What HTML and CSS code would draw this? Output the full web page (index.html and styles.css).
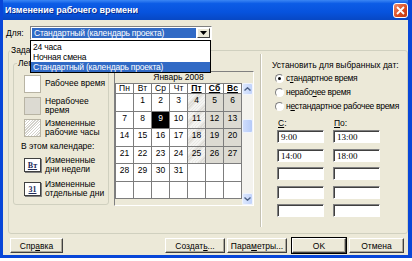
FILE: index.html
```html
<!DOCTYPE html>
<html lang="ru">
<head>
  <meta charset="UTF-8">
  <title>Изменение рабочего времени</title>
  <link rel="stylesheet" href="styles.css">
</head>
<body>
  <div class="window">
    <div class="titlebar">
      <span class="title">Изменение рабочего времени</span>
      <span class="close">
        <svg width="9" height="9" viewBox="0 0 9 9"><path d="M1 1L8 8M8 1L1 8" stroke="#fff" stroke-width="1.8"/></svg>
      </span>
    </div>

    <div class="client">
      <div class="for-row">
        <span class="for-label">Для:</span>
        <div class="combo">
          <span class="combo-value">Стандартный (календарь проекта)</span>
          <span class="combo-btn">
            <svg width="7" height="4" viewBox="0 0 7 4"><path d="M0 0H7L3.5 4Z" fill="#000"/></svg>
          </span>
          <ul class="dropdown">
            <li>24 часа</li>
            <li>Ночная смена</li>
            <li class="selected">Стандартный (календарь проекта)</li>
          </ul>
        </div>
      </div>

      <div class="group">
        <span class="group-caption">Задание рабочего времени для выбранных дат</span>
        <div class="group-body">
          <div class="legend">
            <span class="legend-caption">Легенда:</span>
            <div class="legend-item">
              <span class="swatch swatch-work"></span>
              <span class="legend-text">Рабочее время</span>
            </div>
            <div class="legend-item">
              <span class="swatch swatch-off"></span>
              <span class="legend-text">Нерабочее<br>время</span>
            </div>
            <div class="legend-item">
              <span class="swatch swatch-changed"></span>
              <span class="legend-text">Измененные<br>рабочие часы</span>
            </div>
            <div class="legend-sub">В этом календаре:</div>
            <div class="legend-item legend-mark">
              <span class="marker"><u>Вт</u></span>
              <span class="legend-text">Измененные<br>дни недели</span>
            </div>
            <div class="legend-item legend-mark">
              <span class="marker"><u>31</u></span>
              <span class="legend-text">Измененные<br>отдельные дни</span>
            </div>
          </div>

          <div class="calendar">
            <div class="cal-main">
              <div class="cal-month">Январь 2008</div>
              <table class="cal-grid">
                <tr class="cal-head">
                  <th>Пн</th><th>Вт</th><th>Ср</th><th>Чт</th>
                  <th class="bold"><u>Пт</u></th><th class="bold"><u>Сб</u></th><th class="bold"><u>Вс</u></th>
                </tr>
                <tr>
                  <td></td><td>1</td><td>2</td><td>3</td>
                  <td class="hatch">4</td><td class="off">5</td><td class="off">6</td>
                </tr>
                <tr>
                  <td>7</td><td>8</td><td class="sel">9</td><td>10</td>
                  <td class="hatch">11</td><td class="off">12</td><td class="off">13</td>
                </tr>
                <tr>
                  <td>14</td><td>15</td><td>16</td><td>17</td>
                  <td class="hatch">18</td><td class="off">19</td><td class="off">20</td>
                </tr>
                <tr>
                  <td>21</td><td>22</td><td>23</td><td>24</td>
                  <td class="hatch">25</td><td class="off">26</td><td class="off">27</td>
                </tr>
                <tr>
                  <td>28</td><td>29</td><td>30</td><td>31</td>
                  <td></td><td></td><td></td>
                </tr>
                <tr>
                  <td></td><td></td><td></td><td></td><td></td><td></td><td></td>
                </tr>
              </table>
            </div>
            <div class="scrollbar">
              <span class="sb-btn">
                <svg width="7" height="4" viewBox="0 0 7 4"><path d="M0.5 3.5L3.5 0.8L6.5 3.5" fill="none" stroke="#4d6185" stroke-width="1.4"/></svg>
              </span>
              <span class="sb-track">
                <span class="sb-thumb"></span>
              </span>
              <span class="sb-btn">
                <svg width="7" height="4" viewBox="0 0 7 4"><path d="M0.5 0.5L3.5 3.2L6.5 0.5" fill="none" stroke="#4d6185" stroke-width="1.4"/></svg>
              </span>
            </div>
          </div>

          <div class="vsep"></div>

          <div class="settings">
            <div class="settings-title">Установить для выбранных дат:</div>
            <div class="radio"><span class="radio-dot checked"></span><span>с<u>т</u>андартное время</span></div>
            <div class="radio"><span class="radio-dot"></span><span>нерабо<u>ч</u>ее время</span></div>
            <div class="radio"><span class="radio-dot"></span><span>н<u>е</u>стандартное рабочее время</span></div>
            <div class="times">
              <div class="time-col">
                <div class="time-label"><u>С</u>:</div>
                <div class="field">9:00</div>
                <div class="field">14:00</div>
                <div class="field"></div>
                <div class="field"></div>
                <div class="field"></div>
              </div>
              <div class="time-col">
                <div class="time-label"><u>П</u>о:</div>
                <div class="field">13:00</div>
                <div class="field">18:00</div>
                <div class="field"></div>
                <div class="field"></div>
                <div class="field"></div>
              </div>
            </div>
          </div>
        </div>
      </div>

      <div class="buttons">
        <button class="btn btn-help">Спр<u>а</u>вка</button>
        <button class="btn btn-new">Создат<u>ь</u>...</button>
        <button class="btn btn-params">Пара<u>м</u>етры...</button>
        <button class="btn btn-ok">OK</button>
        <button class="btn btn-cancel">Отмена</button>
      </div>
    </div>
  </div>
</body>
</html>
```

FILE: styles.css
```css
body {
  margin: 0;
  background-color: #fff;
  font-family: "Liberation Sans", Arial, sans-serif;
  font-size: 8.5px;
  color: #000;
}

.window {
  width: 405px;
  height: 255px;
  border-left: 3px solid #0846d8;
  border-right: 4px solid #0846d8;
  border-bottom: 3px solid #0846d8;
  background-color: #ece9d8;
  overflow: hidden;
}

/* title bar */
.titlebar {
  height: 20px;
  margin-left: -3px;
  margin-right: -4px;
  padding: 0 4px 0 5px;
  display: flex;
  align-items: center;
  justify-content: space-between;
  background: linear-gradient(#3b86f4 0%, #0c5ce6 18%, #0753de 60%, #0747c4 100%);
}

.title {
  color: #fff;
  font-weight: bold;
  font-size: 9px;
  text-shadow: 1px 1px #0a2c8c;
}

.close {
  width: 15px;
  height: 15px;
  box-sizing: border-box;
  border: 1px solid #fff;
  border-radius: 3px;
  background: linear-gradient(135deg, #f08b6a, #d94a1f 60%, #c23a10);
  display: flex;
  align-items: center;
  justify-content: center;
}

.client {
  padding: 6px 0 0 3px;
}

/* "Для" row */
.for-row {
  display: flex;
  align-items: center;
  height: 14px;
}

.for-label {
  width: 24px;
}

.combo {
  position: relative;
  width: 182px;
  height: 14px;
  box-sizing: border-box;
  background-color: #fff;
  border: 1px solid;
  border-color: #808080 #fff #fff #808080;
  display: flex;
  padding: 1px;
}

.combo-value {
  flex: 1;
  background-color: #316ac5;
  color: #fff;
  padding-left: 2px;
  line-height: 10px;
  letter-spacing: -0.2px;
}

.combo-btn {
  width: 11px;
  margin-left: 1px;
  background-color: #ece9d8;
  border: 1px solid;
  border-color: #fff #404040 #404040 #fff;
  display: flex;
  align-items: center;
  justify-content: center;
}

.dropdown {
  position: absolute;
  top: 13px;
  left: -1px;
  width: 179px;
  margin: 0;
  padding: 1px 0 0;
  list-style: none;
  background-color: #fff;
  border: 1px solid #000;
  z-index: 5;
  letter-spacing: -0.2px;
}

.dropdown li {
  height: 10px;
  line-height: 10px;
  padding-left: 2px;
}

.dropdown li.selected {
  background-color: #316ac5;
  color: #fff;
}

/* main group */
.group {
  margin: 10px 0 0 2px;
  width: 398px;
  height: 182px;
  border: 1px solid #d0d0bf;
  border-radius: 3px;
}

.group-caption {
  display: block;
  width: max-content;
  margin: -6px 0 0 1px;
  padding: 0 1px;
  background-color: #ece9d8;
  line-height: 11px;
}

.group-body {
  display: flex;
  padding: 1px 0 0 4px;
}

/* legend */
.legend {
  width: 96px;
  height: 142px;
  margin-top: 6px;
  border: 1px solid #d0d0bf;
  border-radius: 3px;
  padding: 0 0 0 10px;
  box-sizing: border-box;
  white-space: nowrap;
}

.legend-caption {
  display: block;
  width: max-content;
  margin: -6px 0 6px -7px;
  padding: 0 1px;
  background-color: #ece9d8;
  line-height: 11px;
}

.legend-item {
  display: flex;
  align-items: center;
  gap: 4px;
  height: 18px;
  margin-bottom: 4px;
}

.legend-mark {
  margin-bottom: 6px;
}

.legend-text {
  line-height: 9.5px;
}

.swatch {
  width: 17px;
  height: 18px;
  box-sizing: border-box;
  border: 1px solid #b8b4a4;
  flex: none;
}

.swatch-work {
  background-color: #fff;
}

.swatch-off {
  background-color: #dcdad2;
}

.swatch-changed {
  background: repeating-linear-gradient(135deg, #fff 0 1px, #d4d2cb 1px 2px);
}

.legend-sub {
  margin: 0 0 5px -3px;
  line-height: 10px;
}

.marker {
  width: 17px;
  height: 14px;
  box-sizing: border-box;
  flex: none;
  border: 1px solid #404040;
  box-shadow: inset 1px 1px #fff, 1px 1px #808080;
  background-color: #fff;
  color: #1c2a5a;
  font-weight: bold;
  font-size: 8px;
  font-family: "Liberation Serif", serif;
  display: flex;
  align-items: center;
  justify-content: center;
}

/* calendar */
.calendar {
  display: flex;
  margin: 14px 0 0 5px;
  width: 140px;
  height: 135px;
  box-sizing: border-box;
  border: 1px solid;
  border-color: #808080 #fff #fff #808080;
  background-color: #ece9d8;
}

.cal-main {
  width: 127px;
}

.cal-month {
  text-align: center;
  height: 11px;
  line-height: 11px;
}

.cal-grid {
  border-collapse: collapse;
  background-color: #fff;
}

.cal-grid th,
.cal-grid td {
  width: 17px;
  border: 1px solid #7d7d7d;
  padding: 0;
  font-weight: normal;
  text-align: center;
}

.cal-grid th {
  height: 9px;
  line-height: 9px;
}

.cal-grid th.bold {
  font-weight: bold;
}

.cal-grid td {
  height: 17.5px;
  vertical-align: top;
  line-height: 10px;
  padding-top: 1px;
  box-sizing: border-box;
}

.cal-grid td.off {
  background-color: #dcdad2;
}

.cal-grid td.hatch {
  background: repeating-linear-gradient(135deg, #fff 0 1px, #d4d2cb 1px 2px);
}

.cal-grid td.sel {
  background-color: #000;
  color: #fff;
}

.scrollbar {
  width: 11px;
  margin-top: 11px;
  display: flex;
  flex-direction: column;
  background-color: #f4f3ee;
}

.sb-btn {
  height: 12px;
  border-radius: 2px;
  background: linear-gradient(90deg, #dde8fd, #c1d3fb);
  border: 1px solid #f0f4fd;
  box-sizing: border-box;
  display: flex;
  align-items: center;
  justify-content: center;
}

.sb-track {
  flex: 1;
  padding-top: 24px;
}

.sb-thumb {
  display: block;
  height: 12px;
  border-radius: 2px;
  background: linear-gradient(90deg, #cfdcfc, #b6cbf8);
  border: 1px solid #eef3fd;
}

.vsep {
  width: 0;
  height: 173px;
  margin: -3px 0 0 6px;
  border-left: 1px solid #c5c2b2;
  border-right: 1px solid #fff;
}

/* settings */
.settings {
  padding: 3px 0 0 10px;
  white-space: nowrap;
}

.settings-title {
  line-height: 10px;
  margin-bottom: 1px;
}

.radio {
  display: flex;
  align-items: center;
  gap: 2px;
  height: 14px;
  margin-left: 3px;
  letter-spacing: -0.3px;
}

.radio-dot {
  width: 9px;
  height: 9px;
  box-sizing: border-box;
  border-radius: 50%;
  border: 1px solid;
  border-color: #808080 #fff #fff #808080;
  background-color: #fff;
  display: flex;
  align-items: center;
  justify-content: center;
}

.radio-dot.checked::after {
  content: "";
  width: 3px;
  height: 3px;
  border-radius: 50%;
  background-color: #000;
}

.times {
  display: flex;
  gap: 9px;
  margin: 5px 0 0 5px;
}

.time-label {
  line-height: 10px;
  margin: 0 0 2px 1px;
}

.field {
  width: 47px;
  height: 13px;
  box-sizing: border-box;
  margin-bottom: 5.5px;
  background-color: #fff;
  border: 1px solid;
  border-color: #808080 #fff #fff #808080;
  box-shadow: inset 1px 1px #404040;
  padding: 1px 0 0 3px;
  font-family: "Liberation Serif", serif;
  font-size: 9px;
  line-height: 11px;
}

/* buttons */
.buttons {
  display: flex;
  margin: 4px 0 0 4px;
}

.btn {
  height: 15px;
  padding: 0;
  font-family: inherit;
  font-size: 8.5px;
  background-color: #ece9d8;
  border: 1px solid;
  border-color: #fff #404040 #404040 #fff;
  box-shadow: inset -1px -1px #aca899;
  width: 60px;
}

.btn-help {
  width: 53px;
}

.btn-new {
  margin-left: 102px;
}

.btn-params {
  margin-left: 2px;
}

.btn-ok {
  width: 54px;
  margin-left: 5px;
  outline: 1px solid #000;
}

.btn-cancel {
  width: 55px;
  margin-left: 3px;
}
```
